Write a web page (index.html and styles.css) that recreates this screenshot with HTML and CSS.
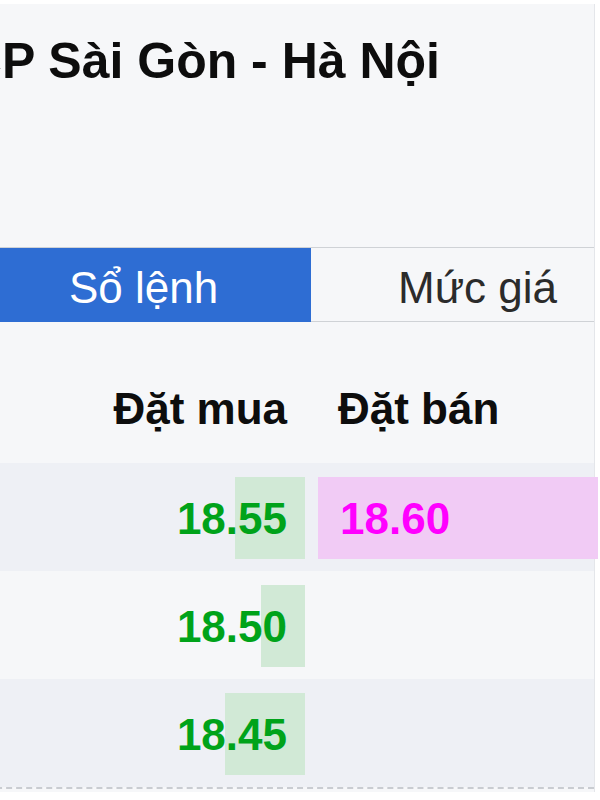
FILE: index.html
```html
<!DOCTYPE html>
<html lang="vi">
<head>
<meta charset="utf-8">
<title>Sổ lệnh - SHB</title>
<link rel="stylesheet" href="styles.css">
</head>
<body>
	<div class="panel">
		<div class="title_wrap">
			<h1 class="title">Ngân hàng TMCP Sài Gòn - Hà Nội</h1>
		</div>

		<div class="tabs">
			<div class="tab active">Sổ lệnh</div>
			<div class="tab tab_price">Mức giá</div>
		</div>

		<div class="book">
			<div class="book_row head">
				<div class="buy">Đặt mua</div>
				<div class="sell">Đặt bán</div>
			</div>
			<div class="book_row odd">
				<div class="buy"><span class="bar" style="width:70px"></span><span class="price">18.55</span></div>
				<div class="sell"><span class="bar" style="width:280px"></span><span class="price">18.60</span></div>
			</div>
			<div class="book_row">
				<div class="buy"><span class="bar" style="width:44px"></span><span class="price">18.50</span></div>
				<div class="sell"></div>
			</div>
			<div class="book_row odd">
				<div class="buy"><span class="bar" style="width:80px"></span><span class="price">18.45</span></div>
				<div class="sell"></div>
			</div>
		</div>
	</div>
</body>
</html>
```

FILE: styles.css
```css
body {
	margin: 0;
	background: #fff;
	overflow: hidden;
	font-family: "Liberation Sans", Arial, Helvetica, sans-serif;
	color: #111;
}
.panel {
	width: 618px;
	margin: 4px 0 0 -24px;
	padding-bottom: 3px;
	background: #f6f7f9;
	border-right: 1px solid #e4e6ea;
}

/* tiêu đề bị cắt bên trái */
.title_wrap {
	width: 464px;
	padding-top: 28px;
	display: flex;
	justify-content: flex-end;
	overflow: hidden;
}
.title {
	margin: 0;
	flex: none;
	white-space: nowrap;
	font-size: 50px;
	line-height: 58px;
	font-weight: bold;
	color: #0d0d0d;
}

/* tabs */
.tabs {
	margin-top: 157px;
	display: grid;
	grid-template-columns: 335px 1fr;
	border-top: 1px solid #cfd2d6;
}
.tab {
	height: 68px;
	padding-top: 6px;
	line-height: 68px;
	font-size: 44px;
	color: #2b2b2b;
	text-align: center;
}
.tab.active {
	background: #2e6dd3;
	color: #fff;
}
.tab_price {
	height: 67px;
	text-align: left;
	padding-left: 87px;
	border-bottom: 1px solid #cfd2d6;
}

/* sổ lệnh */
.book {
	border-bottom: 2px dashed #c9ccd1;
}
.book_row {
	display: grid;
	grid-template-columns: 329px 1fr;
	column-gap: 13px;
	font-size: 44px;
	font-weight: bold;
}
.book_row.head {
	padding: 62px 0 29px;
	line-height: 50px;
	color: #0d0d0d;
}
.book_row.odd {
	background: #eef0f5;
}
.book_row .buy {
	text-align: right;
	padding-right: 18px;
}
.book_row .sell {
	padding-left: 20px;
}
.book_row:not(.head) .buy,
.book_row:not(.head) .sell {
	position: relative;
	height: 104px;
	padding-top: 4px;
	line-height: 104px;
}
.book_row:not(.head) .sell {
	padding-left: 22px;
}
.bar {
	position: absolute;
	top: 14px;
	bottom: 12px;
}
.buy .bar {
	right: 0;
	background: #d1e9d6;
}
.sell .bar {
	left: 0;
	background: #f1cbf5;
}
.price {
	position: relative;
}
.buy .price {
	color: #00a31a;
}
.sell .price {
	color: #ff00ff;
}
```
